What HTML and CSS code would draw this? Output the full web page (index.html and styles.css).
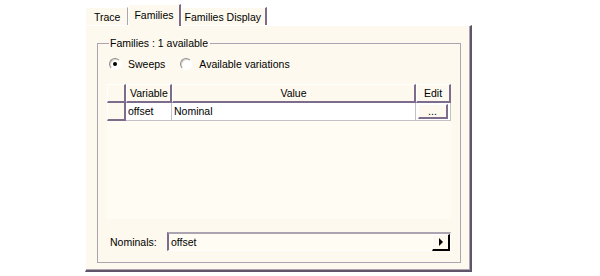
FILE: index.html
```html
<!DOCTYPE html>
<html lang="en">
<head>
    <meta charset="UTF-8">
    <title>Families</title>
    <link rel="stylesheet" href="styles.css">
</head>
<body>
    <div class="dialog">
        <div class="tabs">
            <div class="tab">Trace</div>
            <div class="tab active">Families</div>
            <div class="tab last">Families Display</div>
        </div>

        <div class="page">
            <fieldset class="group">
                <legend>Families : 1 available</legend>

                <div class="radios">
                    <label class="radio"><span class="dot checked"></span>Sweeps</label>
                    <label class="radio"><span class="dot"></span>Available variations</label>
                </div>

                <div class="grid">
                    <div class="hcell corner"></div>
                    <div class="hcell">Variable</div>
                    <div class="hcell center">Value</div>
                    <div class="hcell center">Edit</div>

                    <div class="rowhead"></div>
                    <div class="cell">offset</div>
                    <div class="cell">Nominal</div>
                    <div class="cell edit"><button class="dots">...</button></div>
                </div>

                <div class="nominals">
                    <span class="label">Nominals:</span>
                    <div class="combo">
                        <span class="combo-text">offset</span>
                        <span class="arrow"></span>
                    </div>
                </div>
            </fieldset>
        </div>
    </div>
</body>
</html>
```

FILE: styles.css
```css
:root {
    --bg: #fdf9ee;
    --light: #fffcf4;
    --frame: #aca4b0;
    --dark: #7d6c8c;
    --shadow: #5f5468;
}

* {
    margin: 0;
    padding: 0;
    box-sizing: border-box;
}

body {
    background: #fff;
    font-family: 'Liberation Sans', Arial, sans-serif;
    font-size: 10.5px;
    color: #000;
}

.dialog {
    margin-left: 85px;
    width: 387px;
}

/* Tabs */
.tabs {
    display: flex;
    align-items: flex-end;
    height: 25px;
}

.tab {
    height: 18px;
    padding: 3px 7px 0 8px;
    background: var(--bg);
    border-top: 1px solid #fff;
    border-left: 1px solid #fff;
    border-right: 1px solid var(--frame);
}

.tab.active {
    height: 22px;
    padding: 4px 5px 0 5px;
    margin-bottom: -1px;
    position: relative;
    z-index: 1;
    border-right: 2px solid var(--dark);
}

.tab.last {
    padding: 3px 4px 0 3px;
    border-right: 2px solid var(--dark);
}

/* Page */
.page {
    height: 247px;
    background: var(--bg);
    border-top: 1px solid #fff;
    border-left: 1px solid #fff;
    border-right: 2px solid var(--shadow);
    border-bottom: 2px solid var(--shadow);
    box-shadow: inset -1px -1px 0 var(--frame);
    padding: 11px 9px 8px 11px;
}

.group {
    height: 226px;
    border: 1px solid var(--frame);
    padding: 0 9px 0 9px;
}

.group legend {
    padding: 0 2px 0 1px;
    margin-left: 2px;
}

/* Radios */
.radios {
    display: flex;
    gap: 15px;
    height: 30px;
    align-items: center;
    padding-left: 2px;
    margin-bottom: 5px;
}

.radio {
    display: flex;
    align-items: center;
    gap: 7px;
}

.dot {
    width: 12px;
    height: 12px;
    border-radius: 50%;
    border: 1px solid;
    border-color: #8e8e8e #fff #fff #8e8e8e;
    background: #fff;
    box-shadow: inset 1px 1px 0 #d8d4cc;
    position: relative;
}

.dot.checked::after {
    content: "";
    position: absolute;
    left: 3px;
    top: 3px;
    width: 4px;
    height: 4px;
    border-radius: 50%;
    background: #000;
}

/* Table */
.grid {
    display: grid;
    grid-template-columns: 19px 46px 244px 35px;
    grid-template-rows: 19px 18px;
    align-content: start;
    height: 135px;
    background: var(--light);
}

.hcell {
    background: var(--bg);
    border-left: 1px solid #fff;
    border-top: 1px solid #fff;
    border-right: 2px solid var(--dark);
    border-bottom: 2px solid var(--dark);
    padding: 2px 0 0 3px;
}

.hcell.center {
    text-align: center;
    padding-left: 0;
}

.rowhead {
    background: var(--bg);
    border-left: 1px solid #fff;
    border-right: 2px solid var(--dark);
    border-bottom: 2px solid var(--dark);
}

.cell {
    background: #fff;
    border-right: 1px solid #c4c0c4;
    border-bottom: 1px solid #c4c0c4;
    padding: 2px 0 0 2px;
}

.cell.edit {
    padding: 1px 2px 0 2px;
}

.dots {
    display: block;
    width: 30px;
    height: 15px;
    font: inherit;
    line-height: 9px;
    background: var(--bg);
    border: none;
    border-top: 1px solid #fff;
    border-left: 1px solid #fff;
    border-right: 2px solid var(--dark);
    border-bottom: 2px solid var(--dark);
}

/* Nominals */
.nominals {
    display: flex;
    align-items: center;
    margin-top: 13px;
    padding-left: 3px;
}

.label {
    width: 57px;
}

.combo {
    flex: 1;
    display: flex;
    align-items: center;
    height: 19px;
    background: var(--light);
    border-top: 2px solid var(--frame);
    border-left: 2px solid var(--dark);
    border-right: 1px solid #fff;
    border-bottom: 1px solid #fff;
}

.combo-text {
    flex: 1;
    padding-left: 2px;
}

.arrow {
    width: 18px;
    height: 17px;
    background: var(--bg);
    border-top: 1px solid #fff;
    border-left: 1px solid #fff;
    border-right: 2px solid #000;
    border-bottom: 2px solid #000;
    position: relative;
}

.arrow::after {
    content: "";
    position: absolute;
    left: 6px;
    top: 3px;
    border-left: 4px solid #000;
    border-top: 4px solid transparent;
    border-bottom: 4px solid transparent;
}
```
